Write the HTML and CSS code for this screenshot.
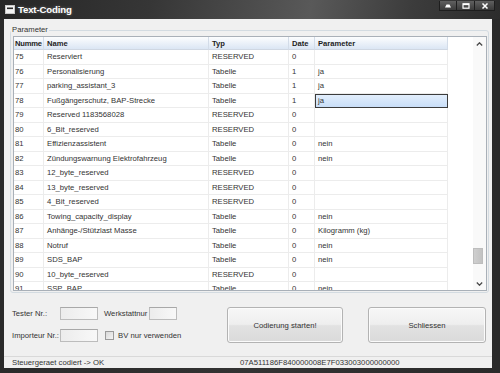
FILE: index.html
```html
<!DOCTYPE html>
<html lang="de">
<head>
<meta charset="utf-8">
<title>Text-Coding</title>
<link rel="stylesheet" href="styles.css">
</head>
<body>
<div class="window">
  <div class="titlebar">
    <svg class="app-icon" width="10" height="9" viewBox="0 0 10 9"><rect x="0.5" y="0.5" width="9" height="8" fill="#f4f4f4" stroke="#c8c8c8"/><rect x="2" y="2.5" width="6" height="1.6" fill="#2a2a2a"/></svg>
    <span class="title">Text-Coding</span>
    <div class="caption-btns">
      <span class="cb"><svg width="8" height="5" viewBox="0 0 8 5"><polygon points="1,4.5 7,4.5 5.5,1.5 2.5,1.5" fill="#fff"/></svg></span>
      <span class="cb"><svg width="8" height="6" viewBox="0 0 8 6"><rect x="1" y="0.8" width="6" height="4.4" fill="none" stroke="#fff" stroke-width="1.2"/><line x1="1" y1="1.4" x2="7" y2="1.4" stroke="#fff" stroke-width="1.4"/></svg></span>
      <span class="cb cb-close"><svg width="8" height="6" viewBox="0 0 8 6"><path d="M1.5 0.5 L6.5 5.5 M6.5 0.5 L1.5 5.5" stroke="#fff" stroke-width="1.5"/></svg></span>
    </div>
  </div>
  <div class="frame">
    <div class="client">
      <fieldset class="group">
        <legend>Parameter</legend>
        <div class="grid">
          <div class="cols">
            <div class="row head">
              <div class="cell c1">Numme</div><div class="cell c2">Name</div><div class="cell c3">Typ</div><div class="cell c4">Date</div><div class="cell c5">Parameter</div>
            </div>
            <div class="row"><div class="cell c1">75</div><div class="cell c2">Reserviert</div><div class="cell c3">RESERVED</div><div class="cell c4">0</div><div class="cell c5"></div></div>
            <div class="row"><div class="cell c1">76</div><div class="cell c2">Personalisierung</div><div class="cell c3">Tabelle</div><div class="cell c4">1</div><div class="cell c5">ja</div></div>
            <div class="row"><div class="cell c1">77</div><div class="cell c2">parking_assistant_3</div><div class="cell c3">Tabelle</div><div class="cell c4">1</div><div class="cell c5">ja</div></div>
            <div class="row"><div class="cell c1">78</div><div class="cell c2">Fußgängerschutz, BAP-Strecke</div><div class="cell c3">Tabelle</div><div class="cell c4">1</div><div class="cell c5 selected">ja</div></div>
            <div class="row"><div class="cell c1">79</div><div class="cell c2">Reserved 1183568028</div><div class="cell c3">RESERVED</div><div class="cell c4">0</div><div class="cell c5"></div></div>
            <div class="row"><div class="cell c1">80</div><div class="cell c2">6_Bit_reserved</div><div class="cell c3">RESERVED</div><div class="cell c4">0</div><div class="cell c5"></div></div>
            <div class="row"><div class="cell c1">81</div><div class="cell c2">Effizienzassistent</div><div class="cell c3">Tabelle</div><div class="cell c4">0</div><div class="cell c5">nein</div></div>
            <div class="row"><div class="cell c1">82</div><div class="cell c2">Zündungswarnung Elektrofahrzeug</div><div class="cell c3">Tabelle</div><div class="cell c4">0</div><div class="cell c5">nein</div></div>
            <div class="row"><div class="cell c1">83</div><div class="cell c2">12_byte_reserved</div><div class="cell c3">RESERVED</div><div class="cell c4">0</div><div class="cell c5"></div></div>
            <div class="row"><div class="cell c1">84</div><div class="cell c2">13_byte_reserved</div><div class="cell c3">RESERVED</div><div class="cell c4">0</div><div class="cell c5"></div></div>
            <div class="row"><div class="cell c1">85</div><div class="cell c2">4_Bit_reserved</div><div class="cell c3">RESERVED</div><div class="cell c4">0</div><div class="cell c5"></div></div>
            <div class="row"><div class="cell c1">86</div><div class="cell c2">Towing_capacity_display</div><div class="cell c3">Tabelle</div><div class="cell c4">0</div><div class="cell c5">nein</div></div>
            <div class="row"><div class="cell c1">87</div><div class="cell c2">Anhänge-/Stützlast Masse</div><div class="cell c3">Tabelle</div><div class="cell c4">0</div><div class="cell c5">Kilogramm (kg)</div></div>
            <div class="row"><div class="cell c1">88</div><div class="cell c2">Notruf</div><div class="cell c3">Tabelle</div><div class="cell c4">0</div><div class="cell c5">nein</div></div>
            <div class="row"><div class="cell c1">89</div><div class="cell c2">SDS_BAP</div><div class="cell c3">Tabelle</div><div class="cell c4">0</div><div class="cell c5">nein</div></div>
            <div class="row"><div class="cell c1">90</div><div class="cell c2">10_byte_reserved</div><div class="cell c3">RESERVED</div><div class="cell c4">0</div><div class="cell c5"></div></div>
            <div class="row"><div class="cell c1">91</div><div class="cell c2">SSP_BAP</div><div class="cell c3">Tabelle</div><div class="cell c4">0</div><div class="cell c5">nein</div></div>
          </div>
          <div class="vscroll">
            <div class="arrow"><svg width="7" height="4" viewBox="0 0 7 4"><path d="M0.8 3.5 L3.5 0.8 L6.2 3.5" fill="none" stroke="#4a4a4a" stroke-width="1.3"/></svg></div>
            <div class="track"><div class="thumb"></div></div>
            <div class="arrow"><svg width="7" height="4" viewBox="0 0 7 4"><path d="M0.8 0.5 L3.5 3.2 L6.2 0.5" fill="none" stroke="#4a4a4a" stroke-width="1.3"/></svg></div>
          </div>
        </div>
      </fieldset>
      <div class="controls">
        <div class="form">
          <span class="lbl">Tester Nr.:</span><span class="input w38"></span>
          <div class="extra"><span>Werkstattnur</span><span class="input w28"></span></div>
          <span class="lbl">Importeur Nr.:</span><span class="input w38"></span>
          <div class="extra extra-check"><span class="check"></span><span>BV nur verwenden</span></div>
        </div>
        <div class="btn b1">Codierung starten!</div>
        <div class="btn b2">Schliessen</div>
      </div>
      <div class="status">
        <div class="s1">Steuergeraet codiert -&gt; OK</div>
        <div class="s2">07A511186F840000008E7F033003000000000</div>
      </div>
    </div>
  </div>
</div>
</body>
</html>
```
FILE: styles.css
```css
* { box-sizing: border-box; }
html, body { margin: 0; padding: 0; }
body {
  width: 500px; height: 373px; overflow: hidden;
  background: #262626;
  font-family: "Liberation Sans", Arial, sans-serif;
  font-size: 7.7px; color: #2a2a2a;
}
.window {
  width: 500px; height: 373px;
  display: flex; flex-direction: column;
  background: linear-gradient(to right, #2a2a2a, #333 50%, #2a2a2a);
}
.titlebar {
  height: 19px; display: flex; align-items: center; padding-left: 5px;
  background: linear-gradient(100deg, #262626 0%, #363636 30%, #595959 62%, #3c3c3c 82%, #2c2c2c 100%);
}
.app-icon { display: block; }
.title {
  margin-left: 3px; font-weight: bold; font-size: 9.6px; color: #fff;
  letter-spacing: -0.15px;
  text-shadow: 0 0 3px rgba(255,255,255,0.35);
}
.caption-btns { margin-left: auto; align-self: flex-start; display: flex; margin-right: 5px; margin-top: 1px; }
.cb {
  width: 18px; height: 10px; display: flex; align-items: center; justify-content: center;
  background: linear-gradient(#606060, #3a3a3a);
  border: 1px solid #1e1e1e; border-top: none;
}
.cb + .cb { border-left: none; }
.cb-close { width: 20px; }
.cb svg { display: block; }
.frame { flex: 1; display: flex; padding: 0 8px 5px 4px; }
.client { flex: 1; display: flex; flex-direction: column; background: #f0f0f0; min-width: 0; }

.group {
  margin: 6px 3px 0 6px; height: 268px; min-width: 0;
  border: 1px solid #d3dbe1; border-radius: 3px;
  padding: 1px 1px 1px 2px;
}
.group legend { padding: 0 1px; margin-left: -2px; line-height: 10px; height: 10px; color: #333; }

.grid { height: 255px; border: 1px solid #a9b0b8; display: flex; background: #fff; }
.cols { flex: 1; overflow: hidden; }
.row { display: flex; height: 14.5px; }
.cell {
  height: 100%; flex: none;
  border-right: 1px solid #ececec; border-bottom: 1px solid #ececec;
  padding-left: 3px; display: flex; align-items: center;
  white-space: nowrap; overflow: hidden; color: #333;
}
.c1 { width: 30px; padding-left: 1px; }
.c2 { width: 165px; }
.c3 { width: 80px; }
.c4 { width: 26px; }
.c5 { width: 133px; }
.row.head { height: 13px; }
.head .cell {
  font-weight: bold; font-size: 7.6px; color: #1e1e1e;
  background: linear-gradient(#fcfdfe, #dbe6f4);
  border-right: 1px solid #d3dce8; border-bottom: 1px solid #cfd7e2;
}
.head .c1 { letter-spacing: -0.2px; }
.cell.selected {
  background: linear-gradient(#e2eefc, #c9def8);
  border: 1px solid #3c3c3c; padding-left: 2px;
}

.vscroll { width: 13px; flex: none; display: flex; flex-direction: column; background: #f9f9f9; }
.arrow { height: 13px; display: flex; align-items: center; justify-content: center; }
.arrow svg { display: block; }
.track { flex: 1; }
.thumb {
  margin-top: 198px; height: 16px; width: 10px;
  background: linear-gradient(to right, #cfcfcf, #c2c2c2);
  border: 1px solid #bdbdbd;
}

.controls { display: flex; align-items: flex-start; margin-top: 14px; padding: 0 6px 0 8px; }
.form {
  width: 164px; flex: none;
  display: grid; grid-template-columns: 48px 38px auto;
  row-gap: 9px; align-items: center;
}
.lbl { color: #333; }
.input {
  height: 13px; display: block;
  border: 1px solid #bcbcbc; border-top-color: #a8a8a8;
  background: linear-gradient(to right, #ececec, #f8f8f8);
}
.w38 { width: 38px; }
.w28 { width: 28px; }
.extra { display: flex; align-items: center; gap: 2px; padding-left: 6px; color: #333; white-space: nowrap; }
.extra-check { gap: 4px; padding-left: 7px; }
.check {
  width: 9px; height: 9px; display: block;
  border: 1px solid #9a9a9a;
  background: linear-gradient(135deg, #d8d8d8, #f4f4f4);
}
.btn {
  height: 36px; flex: none;
  display: flex; align-items: center; justify-content: center;
  border: 1px solid #b3b3b3; border-radius: 3px;
  background: linear-gradient(#f7f7f7, #eeeeee 48%, #e2e2e2 52%, #dadada);
  box-shadow: inset 0 0 0 1px #fbfbfb;
  color: #333;
}
.b1 { width: 116px; margin-left: 51px; }
.b2 { width: 118px; margin-left: 25px; }

.status {
  margin-top: auto; height: 12px;
  border-top: 1px solid #d9d9d9;
  display: flex; align-items: center; color: #333;
}
.s1 { width: 232px; flex: none; padding-left: 8px; white-space: nowrap; }
.s2 { padding-left: 4px; white-space: nowrap; }
```
